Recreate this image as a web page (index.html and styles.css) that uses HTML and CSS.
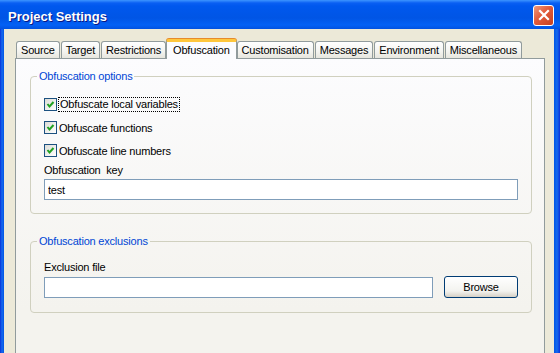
FILE: index.html
```html
<!DOCTYPE html>
<html lang="en">
<head>
    <meta charset="UTF-8">
    <title>Project Settings</title>
    <link rel="stylesheet" href="styles.css">
</head>
<body>
    <div class="window">
        <div class="titlebar">
            <span class="title">Project Settings</span>
            <button class="close" aria-label="Close">
                <svg width="12" height="12" viewBox="0 0 12 12">
                    <path d="M2 2 L10 10 M10 2 L2 10" stroke="#fff" stroke-width="2.2" stroke-linecap="square"/>
                </svg>
            </button>
        </div>

        <div class="client">
            <div class="tabs">
                <div class="tab">Source</div>
                <div class="tab">Target</div>
                <div class="tab">Restrictions</div>
                <div class="tab active">Obfuscation</div>
                <div class="tab">Customisation</div>
                <div class="tab">Messages</div>
                <div class="tab">Environment</div>
                <div class="tab">Miscellaneous</div>
            </div>

            <div class="panel">
                <fieldset class="group">
                    <legend>Obfuscation options</legend>
                    <label class="check first">
                        <span class="box"><svg width="11" height="11" viewBox="0 0 11 11"><path d="M2.5 5 L4.5 7.5 L8.5 3" fill="none" stroke="#21a121" stroke-width="2"/></svg></span>
                        <span class="focus">Obfuscate local variables</span>
                    </label>
                    <label class="check">
                        <span class="box"><svg width="11" height="11" viewBox="0 0 11 11"><path d="M2.5 5 L4.5 7.5 L8.5 3" fill="none" stroke="#21a121" stroke-width="2"/></svg></span>
                        <span>Obfuscate functions</span>
                    </label>
                    <label class="check">
                        <span class="box"><svg width="11" height="11" viewBox="0 0 11 11"><path d="M2.5 5 L4.5 7.5 L8.5 3" fill="none" stroke="#21a121" stroke-width="2"/></svg></span>
                        <span>Obfuscate line numbers</span>
                    </label>
                    <label class="field-label key-label">Obfuscation&nbsp; key</label>
                    <input class="textbox" type="text" value="test">
                </fieldset>

                <fieldset class="group second">
                    <legend>Obfuscation exclusions</legend>
                    <label class="field-label file-label">Exclusion file</label>
                    <div class="file-row">
                        <input class="textbox" type="text" value="">
                        <button class="btn">Browse</button>
                    </div>
                </fieldset>
            </div>
        </div>
    </div>
</body>
</html>
```

FILE: styles.css
```css
body {
    margin: 0;
    font-family: "Liberation Sans", Arial, sans-serif;
    font-size: 11px;
    letter-spacing: -0.2px;
    color: #000;
}
.window {
    width: 560px;
    height: 353px;
    overflow: hidden;
    display: flex;
    flex-direction: column;
    background: linear-gradient(to right, #0831d9 0, #166aee 2px, #0055e5 4px, #0055e5 554px, #166aee 557px, #0831d9 560px);
}
.titlebar {
    height: 29px;
    flex: none;
    display: flex;
    align-items: center;
    justify-content: space-between;
    padding: 0 6px 0 8px;
    background: linear-gradient(to bottom, #3d95ff 0, #0a5ff3 3px, #0058ee 6px, #0055e5 18px, #0361f5 25px, #0152e0 29px);
}
.title {
    color: #fff;
    font-weight: bold;
    font-size: 13px;
    letter-spacing: 0;
    padding-top: 3px;
    text-shadow: 1px 1px 0 #0a1883;
}
.close {
    width: 21px;
    height: 21px;
    margin-top: 1px;
    padding: 0;
    display: flex;
    align-items: center;
    justify-content: center;
    border: 1px solid #fff;
    border-radius: 3px;
    background: linear-gradient(135deg, #f09a7c 0, #e25b3b 45%, #c7401f 100%);
}
.client {
    flex: 1;
    margin: 0 6px 0 4px;
    padding-top: 10px;
    background: #ece9d8;
    display: flex;
    flex-direction: column;
}
.tabs {
    display: flex;
    align-items: flex-end;
    gap: 1px;
    margin: 0 9px 0 12px;
    position: relative;
    z-index: 1;
}
.tab {
    height: 16px;
    line-height: 16px;
    padding: 0 4px;
    border: 1px solid #919b9c;
    border-bottom: none;
    border-radius: 3px 3px 0 0;
    background: linear-gradient(to bottom, #ffffff, #f3f3ef 60%, #e7e6de);
    white-space: nowrap;
}
.tab.active {
    height: 17px;
    line-height: 17px;
    margin: 0 -1px -1px;
    padding: 0 6px;
    border-top: 3px solid #ffc73c;
    border-radius: 3px 3px 0 0;
    background: #fcfcfe;
    box-shadow: 0 -1px 0 #e68b2c;
}
.panel {
    flex: 1;
    margin: 0 9px 0 11px;
    padding: 11px 12px 0 14px;
    border: 1px solid #919b9c;
    border-bottom: none;
    background: linear-gradient(to bottom, #fcfcfe, #f4f3ee 250px);
}
.group {
    margin: 0;
    padding: 0 13px 13px;
    border: 1px solid #d0d0bf;
    border-radius: 4px;
}
.group legend {
    margin-left: -7px;
    padding: 0 2px;
    line-height: 13px;
    color: #0046d5;
}
.group.second {
    margin-top: 21px;
    padding-bottom: 14px;
}
.check {
    display: flex;
    align-items: center;
    height: 13px;
    margin-top: 10px;
}
.check.first {
    margin-top: 15px;
}
.box {
    width: 11px;
    height: 11px;
    border: 1px solid #1c5180;
    background: linear-gradient(135deg, #dcdcd7, #ffffff);
    display: flex;
    margin-right: 2px;
}
.focus {
    outline: 1px dotted #000;
    outline-offset: 0;
    padding: 0 1px;
    line-height: 13px;
}
.field-label {
    display: block;
    line-height: 13px;
    margin-bottom: 2px;
}
.key-label {
    margin-top: 7px;
}
.file-label {
    margin-top: 13px;
}
.textbox {
    box-sizing: border-box;
    display: block;
    width: 100%;
    height: 21px;
    margin: 0;
    padding: 0 3px;
    border: 1px solid #7f9db9;
    background: #fff;
    font-family: inherit;
    font-size: 11px;
    letter-spacing: -0.2px;
    outline: none;
}
.file-row {
    display: flex;
    align-items: center;
    gap: 11px;
}
.file-row .textbox {
    flex: 1;
}
.btn {
    width: 74px;
    height: 22px;
    flex: none;
    padding: 0;
    border: 1px solid #003c74;
    border-radius: 3px;
    background: linear-gradient(to bottom, #ffffff, #f3f3ef 70%, #d6d0c5);
    font-family: inherit;
    font-size: 11px;
    letter-spacing: -0.2px;
    color: #000;
}
```
